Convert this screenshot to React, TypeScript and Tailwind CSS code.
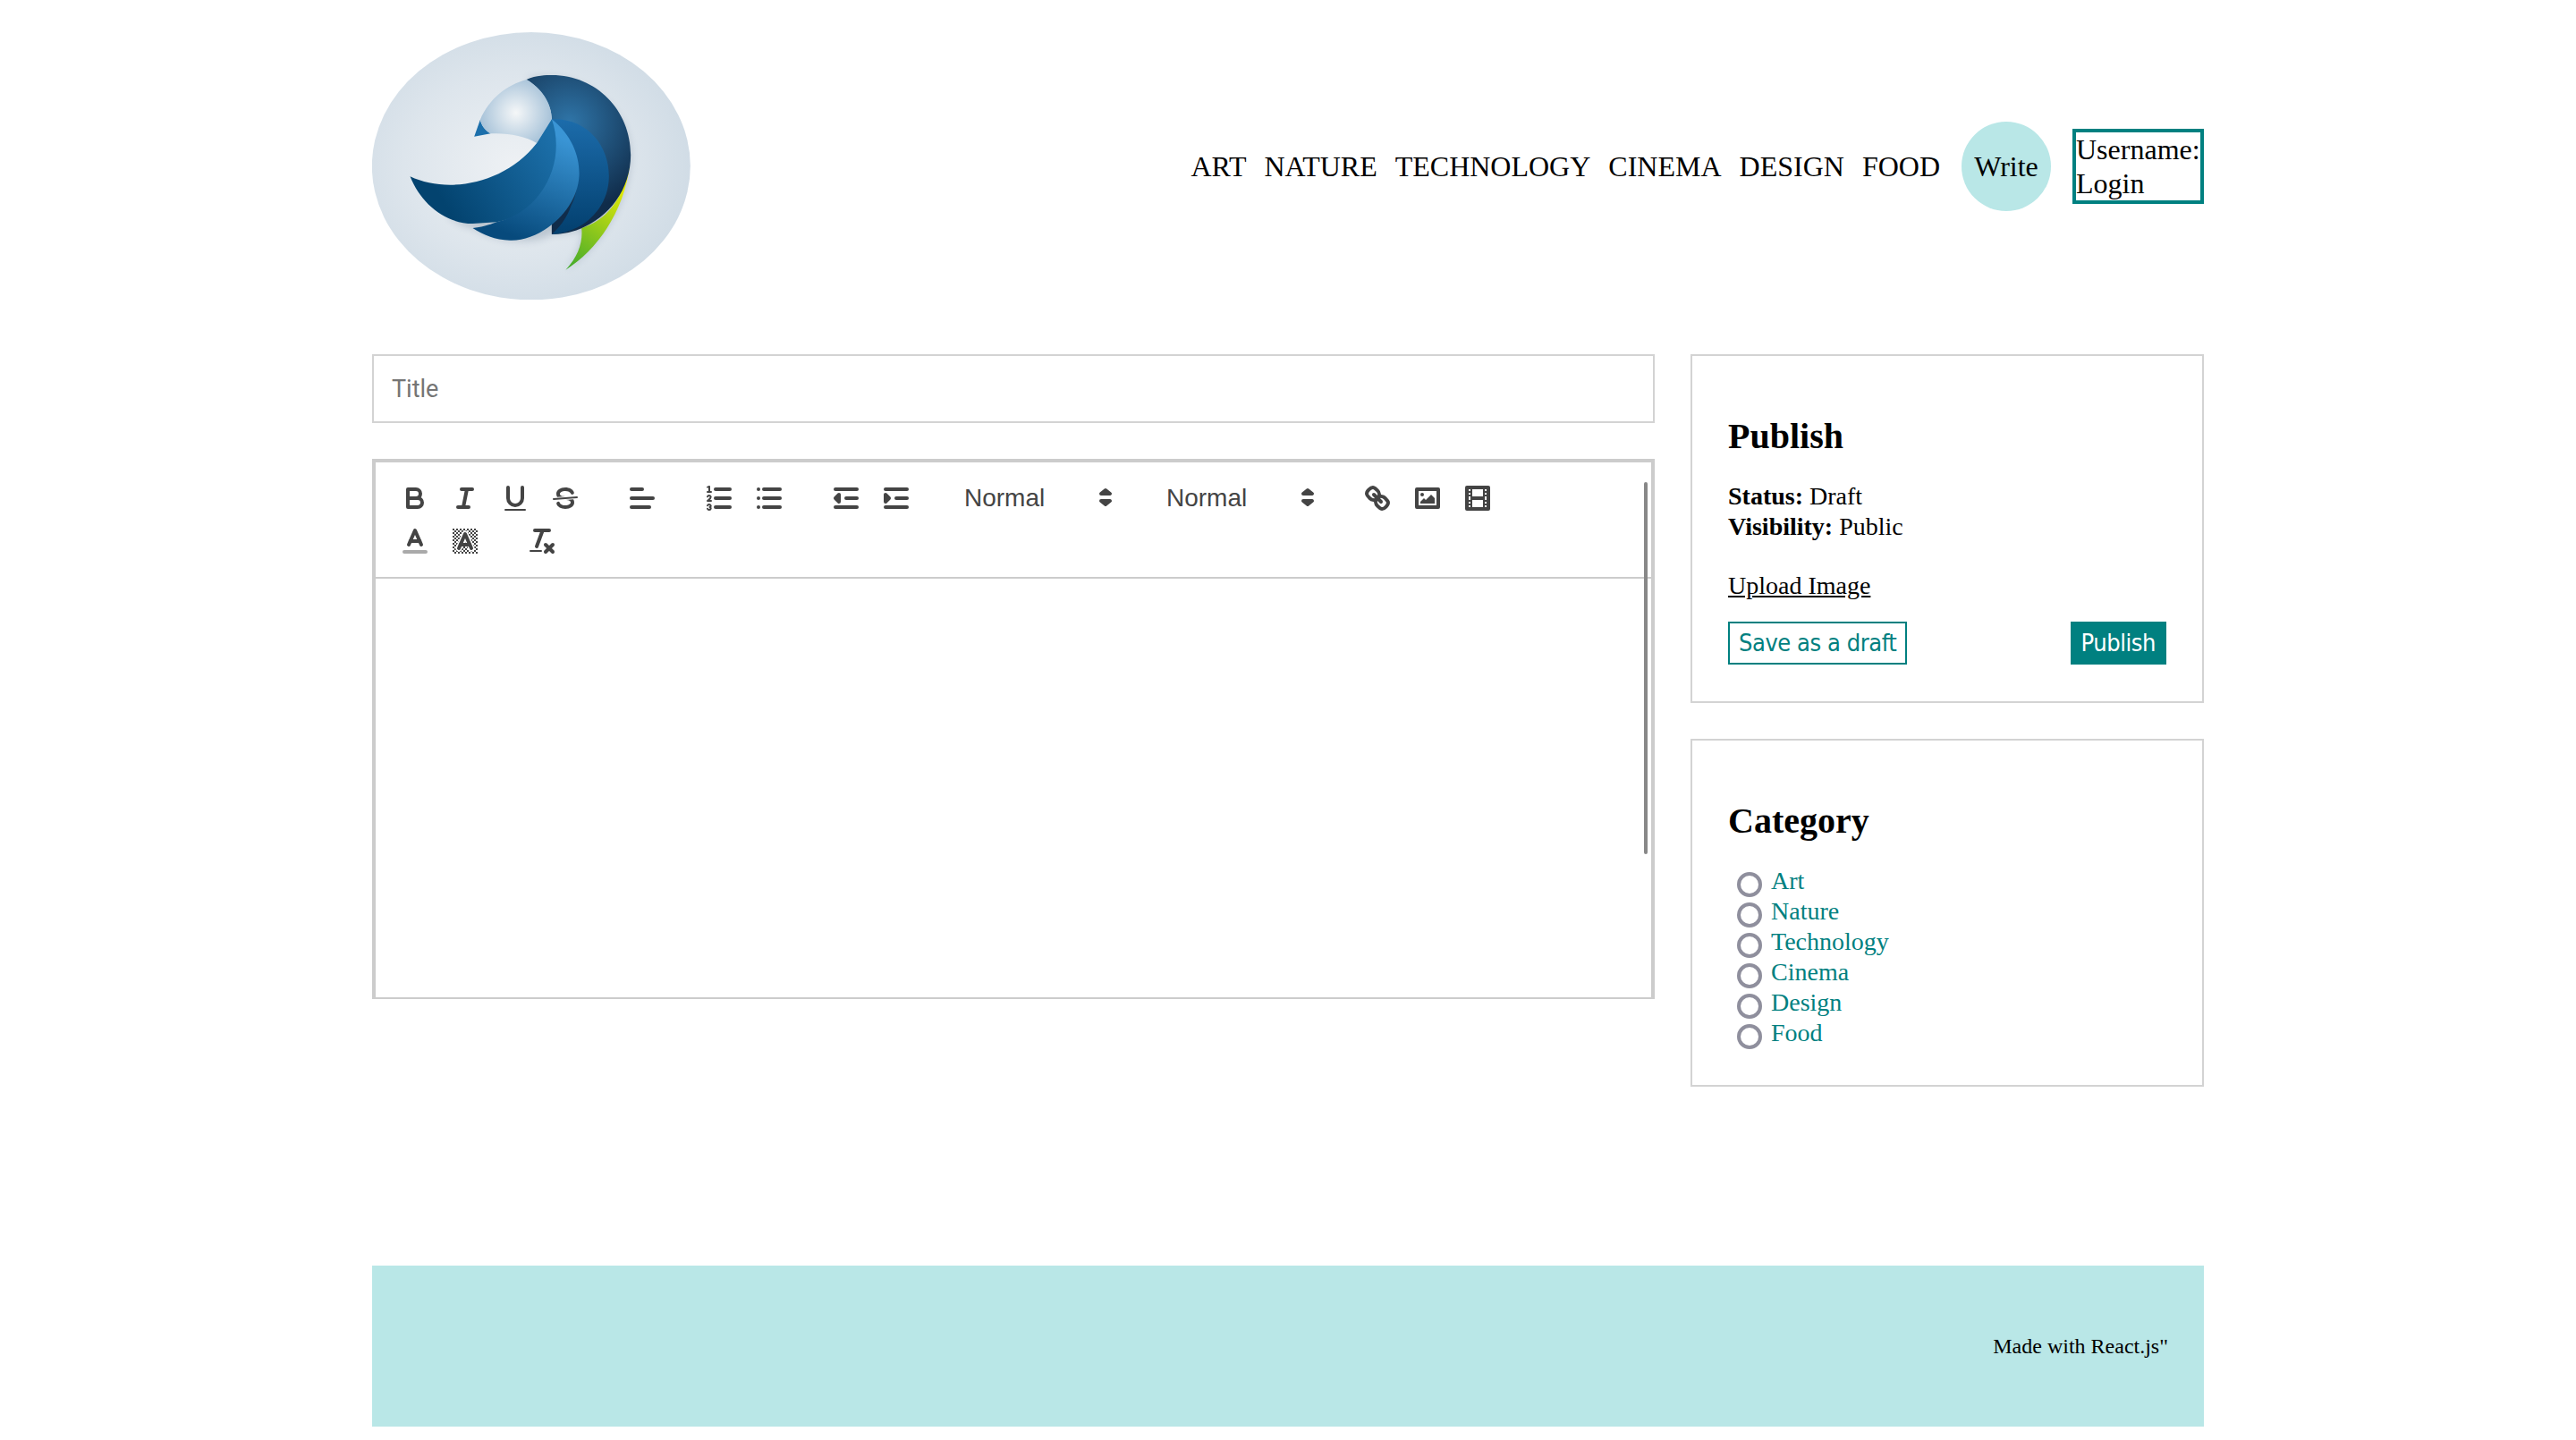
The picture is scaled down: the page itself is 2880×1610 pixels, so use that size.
const NAV = ['ART', 'NATURE', 'TECHNOLOGY', 'CINEMA', 'DESIGN', 'FOOD'];
const CATEGORIES = ['Art', 'Nature', 'Technology', 'Cinema', 'Design', 'Food'];

function Logo() {
  return (
    <svg width="356" height="299" viewBox="48 48 1067 897" className="block" aria-label="Logo">
      <defs>
        <radialGradient id="bg" cx="45%" cy="50%" r="58%">
          <stop offset="0" stopColor="#eef1f4" />
          <stop offset="0.6" stopColor="#dde5ec" />
          <stop offset="1" stopColor="#cfdbe5" />
        </radialGradient>
        <radialGradient id="back" gradientUnits="userSpaceOnUse" cx="710" cy="350" r="300">
          <stop offset="0" stopColor="#2f75a8" />
          <stop offset="1" stopColor="#102c4a" />
        </radialGradient>
        <radialGradient id="head" gradientUnits="userSpaceOnUse" cx="530" cy="318" r="125">
          <stop offset="0" stopColor="#f5f7f8" />
          <stop offset="1" stopColor="#a5c1d8" />
        </radialGradient>
        <linearGradient id="wingA" gradientUnits="userSpaceOnUse" x1="300" y1="640" x2="660" y2="420">
          <stop offset="0" stopColor="#03436f" />
          <stop offset="1" stopColor="#1c6fa9" />
        </linearGradient>
        <linearGradient id="wingB" gradientUnits="userSpaceOnUse" x1="540" y1="740" x2="680" y2="400">
          <stop offset="0" stopColor="#074a7c" />
          <stop offset="1" stopColor="#3a95d5" />
        </linearGradient>
        <linearGradient id="wingC" gradientUnits="userSpaceOnUse" x1="740" y1="720" x2="740" y2="340">
          <stop offset="0" stopColor="#03406f" />
          <stop offset="1" stopColor="#1c6cab" />
        </linearGradient>
        <linearGradient id="tail" gradientUnits="userSpaceOnUse" x1="700" y1="840" x2="910" y2="540">
          <stop offset="0" stopColor="#3fa92c" />
          <stop offset="0.55" stopColor="#a4d018" />
          <stop offset="1" stopColor="#f6f200" />
        </linearGradient>
        <filter id="soft" x="-20%" y="-20%" width="140%" height="140%">
          <feGaussianBlur stdDeviation="12" />
        </filter>
      </defs>
      <ellipse cx="581" cy="497" rx="534" ry="449" fill="url(#bg)" />
      {/* soft shadow under the bird only, the pale crescent is the backdrop itself */}
      <path
        d="M300 660C420 620 560 620 650 440C700 340 620 240 565 207C700 160 915 280 915 460C915 620 800 780 697 845C740 800 755 750 750 712C700 725 670 726 650 726L620 740C540 760 450 745 385 705C350 700 320 680 300 660Z"
        fill="#8b9bab"
        opacity="0.45"
        filter="url(#soft)"
      />
      <path d="M750 705C830 680 885 620 912 490C895 650 800 780 697 845C740 800 755 750 750 705Z" fill="url(#tail)" />
      <path d="M565 207C600 192 630 192 650 192C800 192 915 310 915 460C915 610 790 726 650 726L650 340C650 290 615 235 565 207Z" fill="url(#back)" />
      <path d="M650 340C770 335 842 430 842 530C842 640 755 720 650 726C685 695 705 660 715 630C755 560 735 430 650 340Z" fill="url(#wingC)" />
      <path d="M410 342L390 398L445 388C428 378 415 362 410 342Z" fill="#1c6fab" />
      <path d="M565 207C615 235 650 285 650 340L600 420C560 395 500 385 445 388C428 378 415 362 410 342C440 270 500 225 565 207Z" fill="url(#head)" />
      <path d="M175 532C300 590 490 560 600 420L650 340C690 430 680 520 620 600C570 650 520 675 465 685L385 690C290 690 210 620 175 532Z" fill="url(#wingA)" />
      <path d="M650 340C720 395 745 470 742 530C735 650 610 750 510 746C460 745 420 727 385 705C430 700 450 690 465 685C620 650 700 480 650 340Z" fill="url(#wingB)" />
    </svg>
  );
}

function Ico({ children }: { children: React.ReactNode }) {
  return (
    <svg width="36" height="36" viewBox="0 0 18 18" fill="none" stroke="#444" strokeWidth="2" strokeLinecap="round" strokeLinejoin="round">
      {children}
    </svg>
  );
}

function Btn({ children }: { children: React.ReactNode }) {
  return <span className="flex h-12 w-14 items-center justify-center">{children}</span>;
}

function Picker() {
  return (
    <span className="relative ml-[30px] flex h-12 w-[196px] items-center pl-[18px] font-['Liberation_Sans',sans-serif] text-[28px] text-[#444]">
      Normal
      <svg width="36" height="36" viewBox="0 0 18 18" className="absolute right-[2px] top-[5px]" fill="#444" stroke="#444" strokeWidth="2" strokeLinejoin="round">
        <polygon points="6.5 11 9 13 11.5 11 6.5 11" />
        <polygon points="6.5 7 9 5 11.5 7 6.5 7" />
      </svg>
    </span>
  );
}

// Checker squares behind the background-colour icon.
const CHECKS: [number, number][] = [];
for (let y = 2; y < 16; y++) {
  for (let x = 2; x < 16; x++) {
    if ((x + y) % 2 === 0) CHECKS.push([x, y]);
  }
}

function Toolbar() {
  return (
    <div className="flex flex-col border-b-2 border-[#ccc] p-4">
      <div className="flex">
        <Btn>
          <Ico>
            <path d="M5,4H9.5A2.5,2.5,0,0,1,12,6.5v0A2.5,2.5,0,0,1,9.5,9H5A0,0,0,0,1,5,9V4A0,0,0,0,1,5,4Z" />
            <path d="M5,9h5.5A2.5,2.5,0,0,1,13,11.5v0A2.5,2.5,0,0,1,10.5,14H5a0,0,0,0,1,0,0V9A0,0,0,0,1,5,9Z" />
          </Ico>
        </Btn>
        <Btn>
          <Ico>
            <line x1="7" x2="13" y1="4" y2="4" />
            <line x1="5" x2="11" y1="14" y2="14" />
            <line x1="8" x2="10" y1="14" y2="4" />
          </Ico>
        </Btn>
        <Btn>
          <Ico>
            <path d="M5,3V9a4.012,4.012,0,0,0,4,4H9a4.012,4.012,0,0,0,4-4V3" />
            <rect height="1" rx="0.5" ry="0.5" width="12" x="3" y="15" fill="#444" stroke="none" />
          </Ico>
        </Btn>
        <Btn>
          <Ico>
            <line x1="15.5" x2="2.5" y1="8.5" y2="9.5" strokeWidth="1" />
            <path fill="#444" stroke="none" d="M9.007,8C6.542,7.791,6,7.519,6,6.5,6,5.792,7.283,5,9,5c1.571,0,2.765.679,2.969,1.309a1,1,0,0,0,1.9-.617C13.356,4.106,11.354,3,9,3,6.2,3,4,4.538,4,6.5a3.2,3.2,0,0,0,.5,1.843Z" />
            <path fill="#444" stroke="none" d="M8.984,10C11.457,10.208,12,10.479,12,11.5c0,.708-1.283,1.5-3,1.5-1.571,0-2.765-.679-2.969-1.309a1,1,0,1,0-1.9.617C4.644,13.894,6.646,15,9,15c2.8,0,5-1.538,5-3.5a3.2,3.2,0,0,0-.5-1.843Z" />
          </Ico>
        </Btn>
        <span className="w-[30px]" />
        <Btn>
          <Ico>
            <line x1="3" x2="15" y1="9" y2="9" />
            <line x1="3" x2="13" y1="14" y2="14" />
            <line x1="3" x2="9" y1="4" y2="4" />
          </Ico>
        </Btn>
        <span className="w-[30px]" />
        <Btn>
          <Ico>
            <line x1="7" x2="15" y1="4" y2="4" />
            <line x1="7" x2="15" y1="9" y2="9" />
            <line x1="7" x2="15" y1="14" y2="14" />
            <line x1="2.5" x2="4.5" y1="5.5" y2="5.5" strokeWidth="1" />
            <path fill="#444" stroke="none" d="M3.5,6A0.5,0.5,0,0,1,3,5.5V3.085l-0.276.138A0.5,0.5,0,0,1,2.053,3c-0.124-.247-0.023-0.324.224-0.447l1-.5A0.5,0.5,0,0,1,4,2.5v3A0.5,0.5,0,0,1,3.5,6Z" />
            <path strokeWidth="1" d="M4.5,10.5h-2c0-.234,1.85-1.076,1.85-2.234A0.959,0.959,0,0,0,2.5,8.156" />
            <path strokeWidth="1" d="M2.5,14.846a0.959,0.959,0,0,0,1.85-.109A0.7,0.7,0,0,0,3.75,14a0.688,0.688,0,0,0,.6-0.736,0.959,0.959,0,0,0-1.85-.109" />
          </Ico>
        </Btn>
        <Btn>
          <Ico>
            <line x1="6" x2="15" y1="4" y2="4" />
            <line x1="6" x2="15" y1="9" y2="9" />
            <line x1="6" x2="15" y1="14" y2="14" />
            <line x1="3" x2="3" y1="4" y2="4" />
            <line x1="3" x2="3" y1="9" y2="9" />
            <line x1="3" x2="3" y1="14" y2="14" />
          </Ico>
        </Btn>
        <span className="w-[30px]" />
        <Btn>
          <Ico>
            <line x1="3" x2="15" y1="14" y2="14" />
            <line x1="3" x2="15" y1="4" y2="4" />
            <line x1="9" x2="15" y1="9" y2="9" />
            <polyline fill="#444" points="5 7 5 11 3 9 5 7" />
          </Ico>
        </Btn>
        <Btn>
          <Ico>
            <line x1="3" x2="15" y1="14" y2="14" />
            <line x1="3" x2="15" y1="4" y2="4" />
            <line x1="9" x2="15" y1="9" y2="9" />
            <polyline fill="#444" points="3 7 3 11 5 9 3 7" />
          </Ico>
        </Btn>
        <Picker />
        <Picker />
        <span className="w-[30px]" />
        <Btn>
          <Ico>
            <line x1="7" x2="11" y1="7" y2="11" />
            <path d="M8.9,4.577a3.476,3.476,0,0,1,.36,4.679A3.476,3.476,0,0,1,4.577,8.9C3.185,7.5,2.035,6.4,4.217,4.217S7.5,3.185,8.9,4.577Z" />
            <path d="M13.423,9.1a3.476,3.476,0,0,0-4.679-.36,3.476,3.476,0,0,0,.36,4.679c1.392,1.392,2.5,2.542,4.679.36S14.815,10.5,13.423,9.1Z" />
          </Ico>
        </Btn>
        <Btn>
          <Ico>
            <rect height="10" width="12" x="3" y="4" />
            <circle cx="6" cy="7" r="1" fill="#444" stroke="none" />
            <polyline fill="#444" stroke="none" points="5 12 5 11 7 9 8 10 11 7 13 9 13 12 5 12" />
          </Ico>
        </Btn>
        <Btn>
          <Ico>
            <rect height="12" width="12" x="3" y="3" />
            <g fill="#444" stroke="none">
              <rect height="12" width="1" x="5" y="3" />
              <rect height="12" width="1" x="12" y="3" />
              <rect height="2" width="8" x="5" y="8" />
              <rect height="1" width="3" x="3" y="5" />
              <rect height="1" width="3" x="3" y="7" />
              <rect height="1" width="3" x="3" y="10" />
              <rect height="1" width="3" x="3" y="12" />
              <rect height="1" width="3" x="12" y="5" />
              <rect height="1" width="3" x="12" y="7" />
              <rect height="1" width="3" x="12" y="10" />
              <rect height="1" width="3" x="12" y="12" />
            </g>
          </Ico>
        </Btn>
      </div>
      <div className="flex">
        <Btn>
          <Ico>
            <line x1="3" x2="15" y1="15" y2="15" stroke="#aaa" />
            <polyline points="5.5 11 9 3 12.5 11" />
            <line x1="11.63" x2="6.38" y1="9" y2="9" />
          </Ico>
        </Btn>
        <Btn>
          <Ico>
            <g fill="#444" stroke="none">
              {CHECKS.map(([x, y]) => (
                <rect key={`${x}-${y}`} x={x} y={y} width="1" height="1" />
              ))}
            </g>
            <polyline points="5.5 13 9 5 12.5 13" stroke="#fff" strokeWidth="3.5" />
            <polyline points="5.5 13 9 5 12.5 13" />
            <line x1="11.63" x2="6.38" y1="11" y2="11" />
          </Ico>
        </Btn>
        <span className="w-[30px]" />
        <Btn>
          <Ico>
            <line x1="5" x2="13" y1="3" y2="3" />
            <line x1="6" x2="9.35" y1="12" y2="3" />
            <line x1="11" x2="15" y1="11" y2="15" />
            <line x1="15" x2="11" y1="11" y2="15" />
            <rect height="1" rx="0.5" ry="0.5" width="7" x="2" y="14" fill="#444" stroke="none" />
          </Ico>
        </Btn>
      </div>
    </div>
  );
}

export default function App() {
  return (
    <div className="mx-auto w-[2048px] bg-white font-['Liberation_Serif',serif] text-black">
      <header className="flex items-center justify-between pb-[61px] pt-9">
        <Logo />
        <nav className="flex items-center text-[32px]">
          <div className="flex gap-5">
            {NAV.map((n) => (
              <a key={n}>{n}</a>
            ))}
          </div>
          <a className="ml-6 flex h-[100px] w-[100px] items-center justify-center rounded-full bg-[#b9e7e7]">Write</a>
          <div className="ml-6 box-border h-[84px] w-[147px] overflow-hidden border-4 border-[#008080] leading-[38px]">
            Username:
            <br />
            Login
          </div>
        </nav>
      </header>

      <main className="flex justify-between">
        <div className="w-[1434px]">
          <input
            placeholder="Title"
            className="box-border h-[77px] w-full border-2 border-[#d3d3d3] px-5 font-['Roboto',sans-serif] text-[27px] outline-none placeholder:text-[#757575]"
          />
          <div className="relative mt-10 h-[604px] border-x-4 border-b-2 border-t-4 border-[#ccc]">
            <Toolbar />
            <div className="absolute right-1 top-[22px] h-[416px] w-1 rounded-sm bg-[#888]" />
          </div>
        </div>

        <aside className="flex w-[574px] flex-col gap-10">
          <section className="box-border h-[390px] border-2 border-[#d3d3d3] px-10 pt-[67px] text-[28px] leading-[34px]">
            <h1 className="text-[40px] font-bold leading-[46px]">Publish</h1>
            <p className="mt-[27px]">
              <b>Status:</b> Draft
            </p>
            <p>
              <b>Visibility:</b> Public
            </p>
            <label className="mt-8 block underline">Upload Image</label>
            <div className="mt-[23px] flex justify-between font-['DejaVu_Sans_Condensed','DejaVu_Sans',sans-serif] text-[27px] tracking-[-0.45px]">
              <button className="box-border h-12 border-2 border-[#008080] bg-white px-[10px] text-[#008080]">Save as a draft</button>
              <button className="box-border h-12 border-2 border-[#008080] bg-[#008080] px-[10px] text-white">Publish</button>
            </div>
          </section>

          <section className="box-border h-[389px] border-2 border-[#d3d3d3] px-10 pt-[67px] text-[28px] leading-[34px]">
            <h1 className="text-[40px] font-bold leading-[46px]">Category</h1>
            <ul className="mt-[27px]">
              {CATEGORIES.map((c) => (
                <li key={c} className="flex h-[34px] items-center text-[#008080]">
                  <input
                    type="radio"
                    name="category"
                    className="mx-[10px] mt-2 box-border h-7 w-7 appearance-none rounded-full border-4 border-[#8f8f9d] bg-white"
                  />
                  <span>{c}</span>
                </li>
              ))}
            </ul>
          </section>
        </aside>
      </main>

      <footer className="mb-[15px] mt-[200px] flex h-[180px] items-center justify-end bg-[#b9e7e7] pr-10 text-2xl">
        Made with React.js"
      </footer>
    </div>
  );
}
